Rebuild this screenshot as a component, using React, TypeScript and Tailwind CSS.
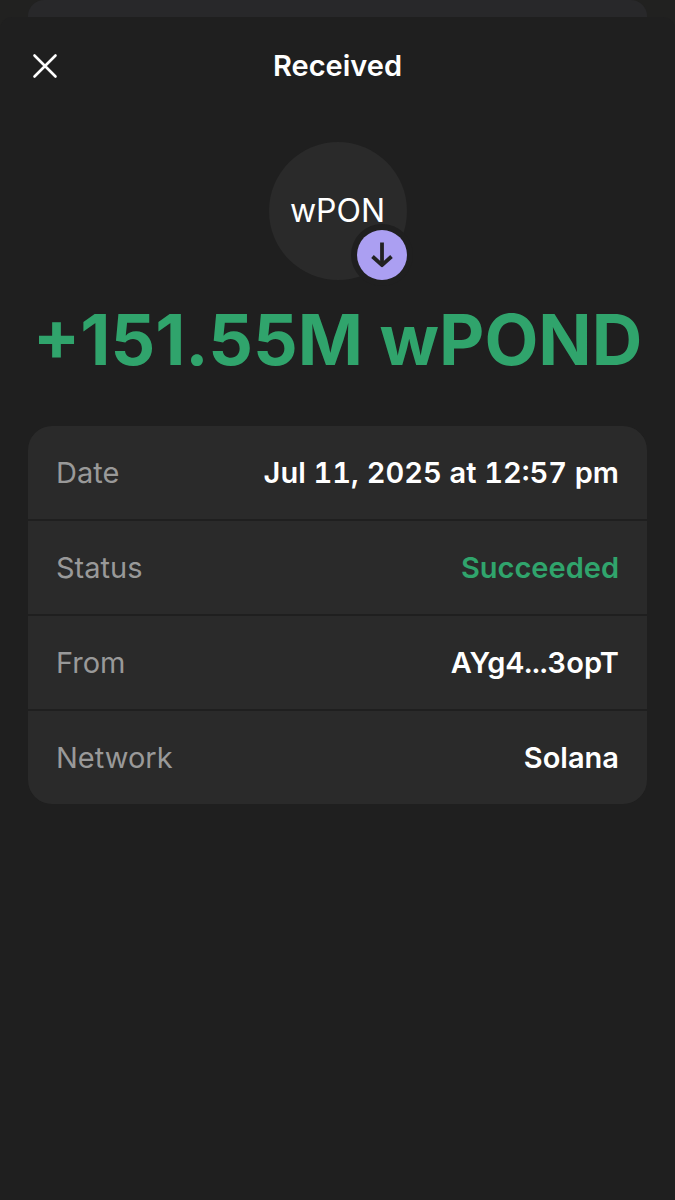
import { ReactNode } from "react";

type RowProps = {
  label: string;
  children: ReactNode;
};

const Row = ({ label, children }: RowProps) => {
  return (
    <div className="flex items-center justify-between h-[93px] px-7 bg-[#2a2a2a]">
      <dt className="text-[#999999]">{label}</dt>
      <dd className="font-semibold text-white tabular-nums">{children}</dd>
    </div>
  );
};

export default function App() {
  return (
    <div className="flex flex-col min-h-screen bg-[#212120] font-['Inter','Liberation_Sans',sans-serif]">
      {/* edge of the card behind the sheet */}
      <div className="h-[17px] px-7">
        <div className="h-full rounded-t-2xl bg-[#28282a]" />
      </div>

      <main className="grow rounded-t-xl bg-[#1f1f1f]">
        <header className="grid grid-cols-[1fr_auto_1fr] items-center h-[98px] px-8">
          <button type="button" aria-label="Close" className="w-[26px] text-white">
            <svg viewBox="0 0 26 26" className="w-full" fill="none" stroke="currentColor" strokeWidth="2.6" strokeLinecap="round">
              <path d="M2.5 2.5l21 21M23.5 2.5l-21 21" />
            </svg>
          </button>
          <h1 className="text-[29px] font-semibold text-white">Received</h1>
        </header>

        <section className="flex flex-col items-center pt-[27px]">
          <div className="relative flex items-center justify-center size-[138px] rounded-full bg-[#2a2a2a]">
            <span className="text-[32px] text-white">wPON</span>
            <div className="absolute right-0 bottom-0 flex items-center justify-center size-[50px] rounded-full bg-[#ab9ff2] ring-6 ring-[#1f1f1f]">
              <svg viewBox="0 0 26 26" className="size-[26px]" fill="none" stroke="#222222" strokeWidth="3.8">
                <path d="M13 0.5v22.5" />
                <path d="M3.5 14.5l9.5 8.7 9.5-8.7" strokeLinejoin="round" />
              </svg>
            </div>
          </div>
          <p className="pt-4 text-[70px] leading-[88px] font-bold whitespace-nowrap text-[#30a46c]">
            +151.55M wPOND
          </p>
        </section>

        <dl className="flex flex-col gap-[2px] mx-7 mt-[42px] overflow-hidden rounded-3xl bg-[#1f1f1f] text-[29px]">
          <Row label="Date">Jul 11, 2025 at 12:57 pm</Row>
          <Row label="Status">
            <span className="text-[#30a46c]">Succeeded</span>
          </Row>
          <Row label="From">AYg4...3opT</Row>
          <Row label="Network">Solana</Row>
        </dl>
      </main>
    </div>
  );
}
